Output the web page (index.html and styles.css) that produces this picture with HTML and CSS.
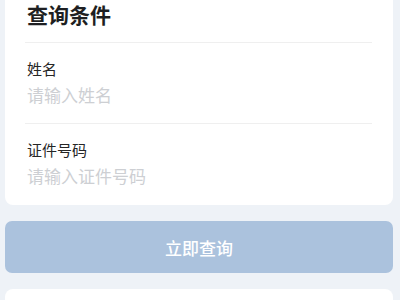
FILE: index.html
```html
<!DOCTYPE html>
<html lang="zh-CN">
<head>
<meta charset="utf-8">
<link rel="stylesheet" href="styles.css">
</head>
<body>
<div class="page">
  <section class="card">
    <h1 class="card-title">查询条件</h1>
    <div class="field">
      <div class="field-label">姓名</div>
      <div class="field-input">请输入姓名</div>
    </div>
    <div class="field">
      <div class="field-label">证件号码</div>
      <div class="field-input">请输入证件号码</div>
    </div>
  </section>
  <button class="submit" type="button">立即查询</button>
  <section class="card card-next"></section>
</div>
</body>
</html>
```
FILE: styles.css
```css
* { box-sizing: border-box; }
html, body {
  margin: 0;
  padding: 0;
  background: #eef2f7;
  font-family: "Noto Sans CJK SC", "Noto Sans", sans-serif;
  overflow: hidden;
}
.page {
  padding: 0 7px 0 5px;
  display: flex;
  flex-direction: column;
}
.card {
  background: #ffffff;
  border-radius: 0 0 8px 8px;
  padding: 0 21px 0 20px;
}
.card-title {
  margin: 0;
  padding: 0 0 14px 2px;
  font-size: 21px;
  font-weight: 700;
  color: #1e1f22;
  line-height: 28px;
  border-bottom: 1px solid #efefef;
}
.field {
  padding: 15px 0 16px 2px;
  border-bottom: 1px solid #efefef;
}
.field:last-child {
  border-bottom: none;
  padding-bottom: 17px;
}
.field-label {
  font-size: 15px;
  line-height: 22px;
  color: #262626;
}
.field-input {
  margin-top: 3px;
  font-size: 17px;
  line-height: 24px;
  color: #cdcfd3;
}
.submit {
  margin-top: 16px;
  height: 52px;
  border: none;
  border-radius: 7px;
  background: #abc2dd;
  color: #ffffff;
  font-family: inherit;
  font-size: 17px;
  font-weight: 500;
}
.card-next {
  margin-top: 16px;
  height: 40px;
  border-radius: 8px;
}
```
